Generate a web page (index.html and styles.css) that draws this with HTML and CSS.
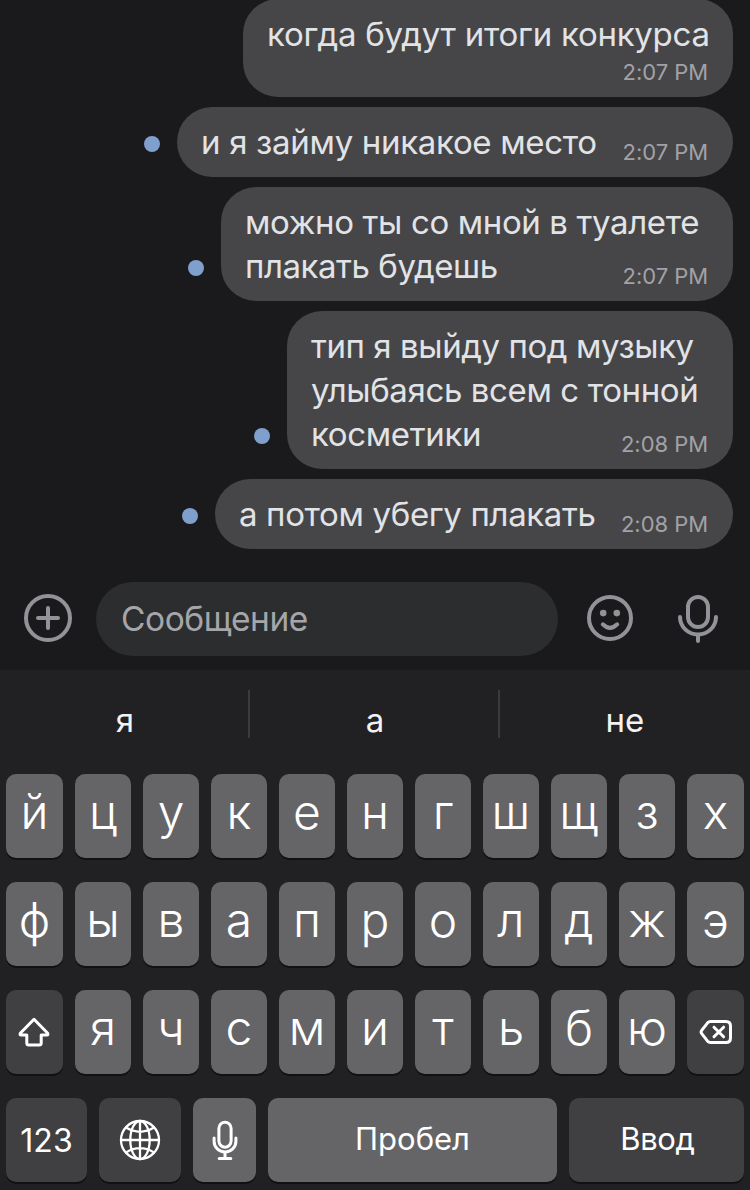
FILE: index.html
```
<!DOCTYPE html>
<html lang="ru">
<head>
<meta charset="utf-8">
<title>Чат</title>
<link rel="stylesheet" href="styles.css">
</head>
<body>
<main class="screen">
  <section class="chat">
    <div class="message"><div class="bubble bubble-first"><p class="text"><span class="l1">когда будут итоги конкурса</span></p><time class="time">2:07 PM</time></div></div>
    <div class="message"><i class="unread"></i><div class="bubble bubble-place"><p class="text"><span class="l2">и я займу никакое место</span></p><time class="time">2:07 PM</time></div></div>
    <div class="message"><i class="unread"></i><div class="bubble bubble-cry"><p class="text"><span class="l3">можно ты со мной в туалете</span><span class="l4">плакать будешь</span></p><time class="time">2:07 PM</time></div></div>
    <div class="message"><i class="unread"></i><div class="bubble bubble-music"><p class="text"><span class="l5">тип я выйду под музыку</span><span class="l6">улыбаясь всем с тонной</span><span class="l7">косметики</span></p><time class="time">2:08 PM</time></div></div>
    <div class="message"><i class="unread"></i><div class="bubble bubble-run"><p class="text"><span class="l8">а потом убегу плакать</span></p><time class="time">2:08 PM</time></div></div>
  </section>

  <section class="composer">
    <svg class="icon" width="48" height="48" viewBox="0 0 48 48"><circle cx="24" cy="24" r="22"/><path d="M24 14v20M14 24h20"/></svg>
    <div class="field"><span class="placeholder">Сообщение</span></div>
    <svg class="icon icon-smile" width="48" height="48" viewBox="0 0 48 48"><circle cx="24" cy="24" r="21"/><circle class="eye" cx="17.2" cy="19.1" r="3.3"/><circle class="eye" cx="30.8" cy="19.1" r="3.3"/><path d="M16.8 30.3Q24 37.3 31.2 30.3"/></svg>
    <svg class="icon icon-mic" width="48" height="50" viewBox="0 0 48 50"><rect x="14" y="4" width="20" height="30" rx="10"/><path d="M6 24a18 17.5 0 0 0 36 0M24 41.5v6.5"/></svg>
  </section>

  <section class="keyboard">
    <div class="suggestions"><span>я</span><span>а</span><span>не</span></div>
    <div class="row">
      <b class="key">й</b><b class="key">ц</b><b class="key">у</b><b class="key">к</b><b class="key">е</b><b class="key">н</b><b class="key">г</b><b class="key">ш</b><b class="key">щ</b><b class="key">з</b><b class="key">х</b>
    </div>
    <div class="row">
      <b class="key">ф</b><b class="key">ы</b><b class="key">в</b><b class="key">а</b><b class="key">п</b><b class="key">р</b><b class="key">о</b><b class="key">л</b><b class="key">д</b><b class="key">ж</b><b class="key">э</b>
    </div>
    <div class="row">
      <b class="key key-icon key-dark"><svg width="57" height="84" viewBox="0 0 57 84"><path d="M28 29.300L14.300 43.300Q13.600 45 15 45H20.800V53Q20.800 55 22.800 55H33.200Q35.200 55 35.200 53V45H41Q42.400 45 41.700 43.300Z"/></svg></b>
      <b class="key">я</b><b class="key">ч</b><b class="key">с</b><b class="key">м</b><b class="key">и</b><b class="key">т</b><b class="key">ь</b><b class="key">б</b><b class="key">ю</b>
      <b class="key key-icon key-dark"><svg width="57" height="84" viewBox="0 0 57 84"><path d="M23.500 31.500H39Q43.500 31.500 43.500 36V48Q43.500 52.500 39 52.500H23.500Q21.800 52.500 20.600 51.200L14.700 43.600Q13.500 42 14.700 40.400L20.600 32.800Q21.800 31.500 23.500 31.500Z"/><path d="M27 37.200l9.600 9.600M36.600 37.200L27 46.800"/></svg></b>
    </div>
    <div class="row row-bottom">
      <b class="key key-label key-dark">123</b>
      <b class="key key-icon key-dark"><svg class="globe" width="82" height="84" viewBox="0 0 82 84"><circle cx="41" cy="42" r="19"/><ellipse cx="41" cy="42" rx="9.700" ry="19"/><path d="M41 23v38M22 42h38M27 29.600Q41 38 55 29.600M27 54.400Q41 46 55 54.400"/></svg></b>
      <b class="key key-icon"><svg width="63" height="84" viewBox="0 0 63 84"><rect x="25.900" y="24.200" width="12.200" height="25" rx="6.100"/><path d="M21.100 40v3.500a10.900 10.400 0 0 0 21.800 0V40M32 54v6.500M26.200 60.500h11.600"/></svg></b>
      <b class="key key-label key-word"><span class="space">Пробел</span></b>
      <b class="key key-label key-word key-dark"><span class="enter">Ввод</span></b>
    </div>
  </section>
</main>
</body>
</html>
```
FILE: styles.css
```
* { box-sizing: border-box; }
html, body { height: 100%; }
body {
  margin: 0;
  overflow: hidden;
  background: #1a1a1c;
  font-family: Inter, "Liberation Sans", sans-serif;
}
.screen {
  width: 750px;
  height: 1190px;
  display: flex;
  flex-direction: column;
  overflow: hidden;
}

/* Conversation */
.chat {
  flex: none;
  display: flex;
  flex-direction: column;
  gap: 10px;
  height: 570px;
  margin-top: -1px;
  padding-right: 17px;
}
.message {
  display: flex;
  justify-content: flex-end;
  align-items: flex-end;
  gap: 17px;
}
.unread {
  width: 16px;
  height: 16px;
  margin-bottom: 25px;
  border-radius: 50%;
  background: #7f9fcd;
}
.bubble {
  display: grid;
  grid-template-columns: minmax(0, 1fr);
  padding: 13px 25px 9px 24px;
  border-radius: 35px;
  background: #464648;
}
.bubble-first { width: 490px; height: 98px; }
.bubble-place { width: 556px; height: 70px; }
.bubble-cry { width: 512px; height: 114px; }
.bubble-music { width: 446px; height: 158px; }
.bubble-run { width: 518px; height: 70px; }
.text {
  grid-area: 1 / 1;
  margin: 0;
  color: #e1e3e6;
  font-size: 33px;
  line-height: 44px;
  white-space: nowrap;
}
.text span { display: block; }
.l1 { letter-spacing: -0.26px; }
.l2 { letter-spacing: -0.31px; }
.l3 { letter-spacing: -0.37px; }
.l4 { letter-spacing: -0.45px; }
.l5 { letter-spacing: -0.43px; }
.l6 { letter-spacing: -0.38px; }
.l7 { letter-spacing: -0.35px; }
.l8 { letter-spacing: -0.35px; }
.time {
  grid-area: 1 / 1;
  align-self: end;
  justify-self: end;
  color: #a2a2a6;
  font-size: 22px;
  line-height: 32px;
  letter-spacing: -0.05px;
}

/* Message input */
.composer {
  flex: none;
  display: flex;
  align-items: center;
  height: 101px;
  padding: 0 28px 0 24px;
}
.icon {
  flex: none;
  display: block;
  margin-bottom: 3px;
  fill: none;
  stroke: #929398;
  stroke-width: 4;
  stroke-linecap: round;
}
.icon .eye { fill: #929398; stroke: none; }
.icon-smile { margin-left: 28px; }
.icon-mic { margin-left: 40px; }
.field {
  width: 462px;
  height: 74px;
  margin: 0 0 1px 24px;
  padding-left: 25px;
  border-radius: 37px;
  background: #2c2d2e;
}
.placeholder {
  color: #a5a6aa;
  font-size: 33.5px;
  line-height: 74px;
  letter-spacing: -0.45px;
}

/* Keyboard */
.keyboard {
  flex: none;
  display: flex;
  flex-direction: column;
  gap: 24px;
  height: 520px;
  padding: 20px 0 0 6px;
  background: #212123;
}
.suggestions {
  display: grid;
  grid-template-columns: 244px 250px 250px;
  height: 60px;
  color: #f2f2f3;
  font-size: 33px;
  line-height: 60px;
  text-align: center;
}
.suggestions span { height: 48px; }
.suggestions span:not(:last-child) { border-right: 2px solid #3b3b3d; }
.suggestions span:first-child { padding-right: 4px; }
.suggestions span:nth-child(2) { padding-left: 2px; }
.row {
  display: grid;
  grid-template-columns: 57px repeat(9, 56px) 57px;
  gap: 12px;
  height: 84px;
}
.row-bottom { grid-template-columns: 81px 82px 63px 289px 175px; }
.key {
  display: flex;
  align-items: center;
  justify-content: center;
  min-width: 0;
  height: 84px;
  padding-bottom: 9px;
  border-radius: 10px;
  background: #656567;
  box-shadow: 0 2px 0 #111113;
  color: #fff;
  font-size: 48px;
  font-weight: 300;
  line-height: 60px;
}
.key-dark { background: #404042; }
.key-icon { padding: 0; }
.key-icon svg {
  display: block;
  fill: none;
  stroke: #fff;
  stroke-width: 3;
  stroke-linecap: round;
  stroke-linejoin: round;
}
.key-icon .globe { stroke-width: 2.3; }
.key-label {
  padding: 1px 0 0;
  font-size: 32px;
  font-weight: 400;
}
.key-word { padding: 0 0 3px; font-size: 31px; }
.enter { padding-left: 2px; letter-spacing: -0.4px; }
```
